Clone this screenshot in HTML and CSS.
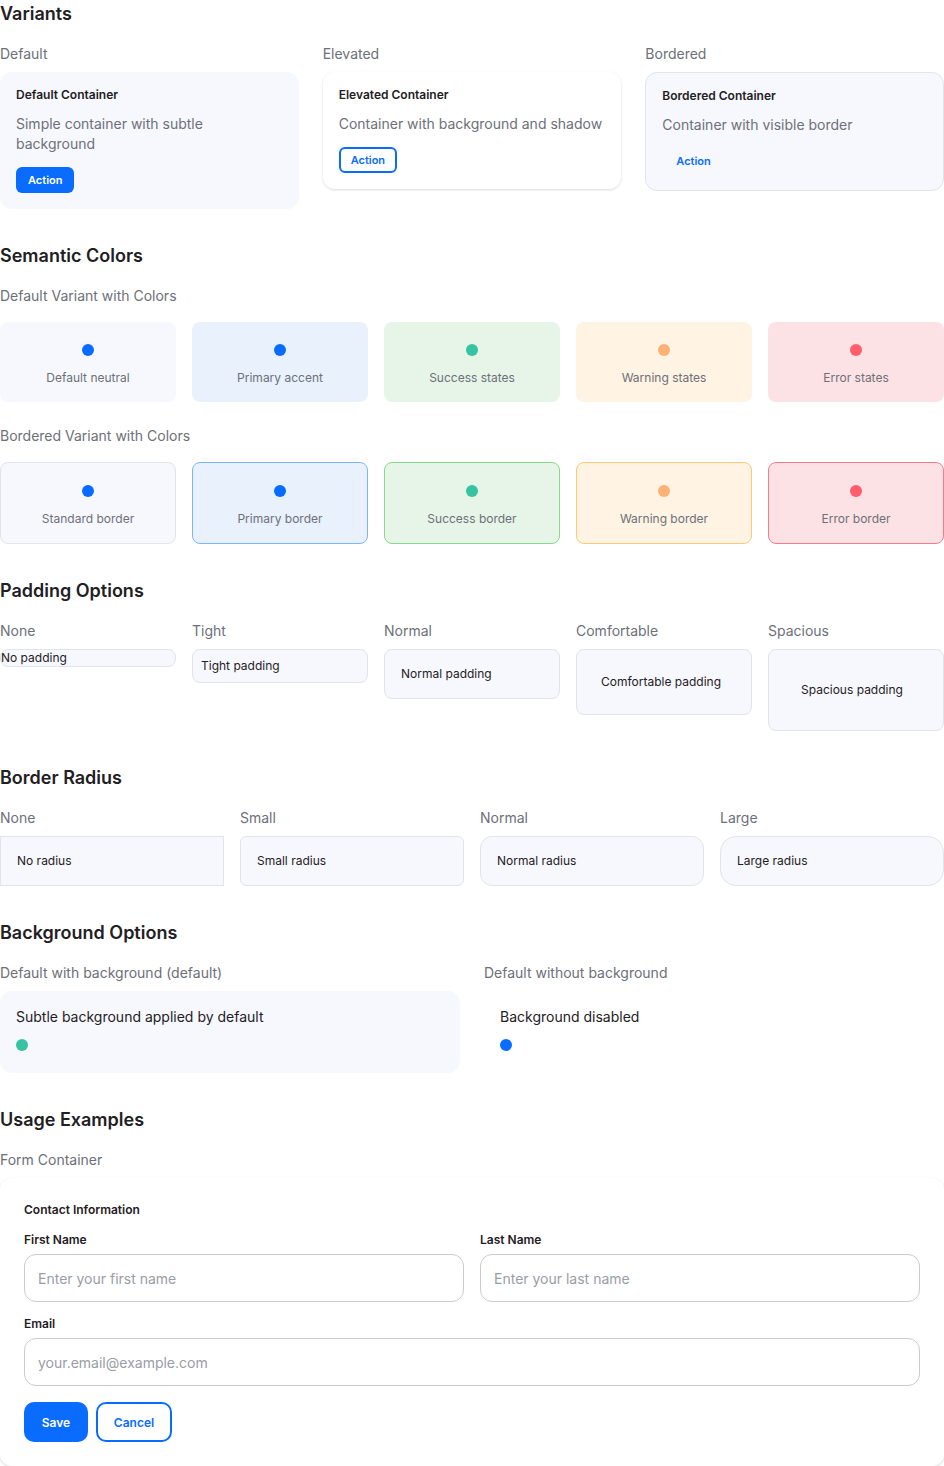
FILE: index.html
```html
<!DOCTYPE html>
<html lang="en">
<head>
<meta charset="utf-8">
<title>Container Variants</title>
<link rel="stylesheet" href="styles.css">
</head>
<body>
<main class="page">

  <section class="section">
    <h2 class="section-title">Variants</h2>
    <div class="grid-3">
      <div class="col">
        <div class="label">Default</div>
        <div class="box box-default">
          <div class="box-title">Default Container</div>
          <p class="box-desc">Simple container with subtle background</p>
          <div><button class="btn btn-solid">Action</button></div>
        </div>
      </div>
      <div class="col">
        <div class="label">Elevated</div>
        <div class="box box-elevated">
          <div class="box-title">Elevated Container</div>
          <p class="box-desc">Container with background and shadow</p>
          <div><button class="btn btn-outline">Action</button></div>
        </div>
      </div>
      <div class="col">
        <div class="label">Bordered</div>
        <div class="box box-bordered">
          <div class="box-title">Bordered Container</div>
          <p class="box-desc">Container with visible border</p>
          <div><button class="btn btn-ghost">Action</button></div>
        </div>
      </div>
    </div>
  </section>

  <section class="section">
    <h2 class="section-title">Semantic Colors</h2>
    <div class="sublabel">Default Variant with Colors</div>
    <div class="grid-5">
      <div class="swatch sw-neutral"><span class="dot-wrap"><span class="dot dot-blue"></span></span><span class="swatch-text">Default neutral</span></div>
      <div class="swatch sw-primary"><span class="dot-wrap"><span class="dot dot-blue"></span></span><span class="swatch-text">Primary accent</span></div>
      <div class="swatch sw-success"><span class="dot-wrap"><span class="dot dot-green"></span></span><span class="swatch-text">Success states</span></div>
      <div class="swatch sw-warning"><span class="dot-wrap"><span class="dot dot-orange"></span></span><span class="swatch-text">Warning states</span></div>
      <div class="swatch sw-error"><span class="dot-wrap"><span class="dot dot-red"></span></span><span class="swatch-text">Error states</span></div>
    </div>
    <div class="sublabel sublabel-spaced">Bordered Variant with Colors</div>
    <div class="grid-5">
      <div class="swatch sw-neutral bd-neutral"><span class="dot-wrap"><span class="dot dot-blue"></span></span><span class="swatch-text">Standard border</span></div>
      <div class="swatch sw-primary bd-primary"><span class="dot-wrap"><span class="dot dot-blue"></span></span><span class="swatch-text">Primary border</span></div>
      <div class="swatch sw-success bd-success"><span class="dot-wrap"><span class="dot dot-green"></span></span><span class="swatch-text">Success border</span></div>
      <div class="swatch sw-warning bd-warning"><span class="dot-wrap"><span class="dot dot-orange"></span></span><span class="swatch-text">Warning border</span></div>
      <div class="swatch sw-error bd-error"><span class="dot-wrap"><span class="dot dot-red"></span></span><span class="swatch-text">Error border</span></div>
    </div>
  </section>

  <section class="section">
    <h2 class="section-title">Padding Options</h2>
    <div class="grid-5 align-start">
      <div class="col">
        <div class="label">None</div>
        <div class="pad-box pad-0">No padding</div>
      </div>
      <div class="col">
        <div class="label">Tight</div>
        <div class="pad-box pad-8">Tight padding</div>
      </div>
      <div class="col">
        <div class="label">Normal</div>
        <div class="pad-box pad-16">Normal padding</div>
      </div>
      <div class="col">
        <div class="label">Comfortable</div>
        <div class="pad-box pad-24">Comfortable padding</div>
      </div>
      <div class="col">
        <div class="label">Spacious</div>
        <div class="pad-box pad-32">Spacious padding</div>
      </div>
    </div>
  </section>

  <section class="section">
    <h2 class="section-title">Border Radius</h2>
    <div class="grid-4">
      <div class="col">
        <div class="label">None</div>
        <div class="rad-box rad-0">No radius</div>
      </div>
      <div class="col">
        <div class="label">Small</div>
        <div class="rad-box rad-s">Small radius</div>
      </div>
      <div class="col">
        <div class="label">Normal</div>
        <div class="rad-box rad-m">Normal radius</div>
      </div>
      <div class="col">
        <div class="label">Large</div>
        <div class="rad-box rad-l">Large radius</div>
      </div>
    </div>
  </section>

  <section class="section">
    <h2 class="section-title">Background Options</h2>
    <div class="grid-2">
      <div class="col">
        <div class="label">Default with background (default)</div>
        <div class="bg-box bg-on">
          <p class="bg-text">Subtle background applied by default</p>
          <span class="dot-row"><span class="dot dot-green"></span></span>
        </div>
      </div>
      <div class="col">
        <div class="label">Default without background</div>
        <div class="bg-box">
          <p class="bg-text">Background disabled</p>
          <span class="dot-row"><span class="dot dot-blue"></span></span>
        </div>
      </div>
    </div>
  </section>

  <section class="section">
    <h2 class="section-title">Usage Examples</h2>
    <div class="label">Form Container</div>
    <form class="form-card">
      <div class="form-title">Contact Information</div>
      <div class="form-row">
        <label class="field">
          <span class="field-label">First Name</span>
          <input class="input" type="text" placeholder="Enter your first name">
        </label>
        <label class="field">
          <span class="field-label">Last Name</span>
          <input class="input" type="text" placeholder="Enter your last name">
        </label>
      </div>
      <label class="field">
        <span class="field-label">Email</span>
        <input class="input" type="email" placeholder="your.email@example.com">
      </label>
      <div class="form-actions">
        <button type="button" class="btn-lg btn-lg-solid">Save</button>
        <button type="button" class="btn-lg btn-lg-outline">Cancel</button>
      </div>
    </form>
  </section>

</main>
</body>
</html>
```

FILE: styles.css
```css
* { box-sizing: border-box; }

html, body {
  margin: 0;
  padding: 0;
  background: #ffffff;
}

body {
  font-family: Inter, "Noto Sans", "Liberation Sans", sans-serif;
  color: #1f2024;
  -webkit-font-smoothing: antialiased;
}

.page {
  width: 944px;
  display: flex;
  flex-direction: column;
  gap: 32px;
  padding-bottom: 40px;
}

.section { display: flex; flex-direction: column; }

.section-title {
  margin: 0 0 16px 0;
  font-size: 18px;
  line-height: 28px;
  font-weight: 600;
  color: #1f2024;
}
.section + .section .section-title { margin: 1px 0 16px 0; }

.label, .sublabel {
  font-size: 14px;
  line-height: 20px;
  color: #6d7079;
  margin-bottom: 8px;
}
.sublabel { margin-bottom: 16px; }
.sublabel-spaced { margin-top: 24px; }

.col { display: flex; flex-direction: column; min-width: 0; }

.grid-3 { display: grid; grid-template-columns: repeat(3, 1fr); gap: 24px; align-items: start; }
.grid-5 { display: grid; grid-template-columns: repeat(5, 1fr); gap: 16px; }
.grid-4 { display: grid; grid-template-columns: repeat(4, 1fr); gap: 16px; }
.grid-2 { display: grid; grid-template-columns: repeat(2, 1fr); gap: 24px; }
.align-start { align-items: start; }

/* Variants */
.box {
  border-radius: 12px;
  padding: 16px;
  display: flex;
  flex-direction: column;
  gap: 12px;
}
.box-default { background: #f7f8fd; }
.box-elevated {
  background: #ffffff;
  box-shadow: 0 1px 3px rgba(17, 24, 39, 0.10), 0 1px 2px rgba(17, 24, 39, 0.06);
}
.box-bordered { background: #f7f8fd; border: 1px solid #e2e4eb; }

.box-title {
  font-size: 12px;
  line-height: 14px;
  font-weight: 600;
  color: #1f2024;
}
.box-desc {
  margin: 0 0 1px 0;
  font-size: 14px;
  line-height: 20px;
  color: #6d7079;
}

.btn {
  font-family: inherit;
  font-size: 11px;
  font-weight: 600;
  height: 26px;
  padding: 0 12px;
  border-radius: 6px;
  cursor: pointer;
}
.btn-solid { background: #0a6cff; color: #ffffff; border: 0; }
.btn-outline { background: #ffffff; color: #0a6cff; border: 2px solid #0a6cff; padding: 0 10px; }
.btn-ghost { background: transparent; color: #0a6cff; border: 0; padding: 0 14px; }

/* Semantic swatches */
.swatch {
  border-radius: 8px;
  padding: 16px;
  display: flex;
  flex-direction: column;
  align-items: center;
  gap: 8px;
}
.dot-wrap {
  width: 24px;
  height: 24px;
  display: flex;
  align-items: center;
  justify-content: center;
}
.dot {
  display: block;
  width: 12px;
  height: 12px;
  border-radius: 50%;
}
.dot-blue { background: #0a6cff; }
.dot-green { background: #35c3a1; }
.dot-orange { background: #ffb075; }
.dot-red { background: #ff5d6b; }

.swatch-text {
  font-size: 12px;
  line-height: 16px;
  color: #6d7079;
}

.sw-neutral { background: #f7f8fd; }
.sw-primary { background: #e9f1fd; }
.sw-success { background: #e7f5e9; }
.sw-warning { background: #fff3e3; }
.sw-error { background: #fde2e5; }

.bd-neutral { border: 1px solid #e2e4eb; }
.bd-primary { border: 1px solid #7ab5ff; }
.bd-success { border: 1px solid #88d78c; }
.bd-warning { border: 1px solid #ffc878; }
.bd-error { border: 1px solid #f7798c; }

/* Padding */
.pad-box {
  background: #f7f8fd;
  border: 1px solid #e2e4eb;
  border-radius: 8px;
  font-size: 12px;
  line-height: 16px;
  color: #1f2024;
}
.pad-0 { padding: 0; }
.pad-8 { padding: 8px; }
.pad-16 { padding: 16px; }
.pad-24 { padding: 24px; }
.pad-32 { padding: 32px; }

/* Radius */
.rad-box {
  background: #f7f8fd;
  border: 1px solid #e2e4eb;
  padding: 16px;
  font-size: 12px;
  line-height: 16px;
  color: #1f2024;
}
.rad-0 { border-radius: 0; }
.rad-s { border-radius: 6px; }
.rad-m { border-radius: 12px; }
.rad-l { border-radius: 16px; }

/* Background */
.bg-box {
  border-radius: 12px;
  padding: 16px;
  display: flex;
  flex-direction: column;
  gap: 6px;
}
.bg-on { background: #f7f8fd; }
.bg-text {
  margin: 0;
  font-size: 14px;
  line-height: 20px;
  color: #1f2024;
}
.dot-row {
  height: 24px;
  display: flex;
  align-items: center;
}

/* Form */
.form-card {
  background: #ffffff;
  border-radius: 12px;
  box-shadow: 0 1px 3px rgba(17, 24, 39, 0.10), 0 1px 2px rgba(17, 24, 39, 0.06);
  padding: 24px;
  display: flex;
  flex-direction: column;
  gap: 14px;
  margin: 0;
}
.form-title {
  font-size: 12px;
  line-height: 16px;
  font-weight: 600;
  color: #1f2024;
}
.form-row {
  display: grid;
  grid-template-columns: 1fr 1fr;
  gap: 16px;
}
.field { display: flex; flex-direction: column; gap: 6px; }
.field-label {
  font-size: 12px;
  line-height: 16px;
  font-weight: 600;
  color: #1f2024;
}
.input {
  height: 48px;
  border: 1px solid #c9cbd2;
  border-radius: 12px;
  padding: 0 13px;
  font-family: inherit;
  font-size: 14px;
  color: #1f2024;
  background: #ffffff;
  outline: none;
  width: 100%;
}
.input::placeholder { color: #9a9da6; }

.form-actions {
  display: flex;
  gap: 8px;
  margin-top: 2px;
}
.btn-lg {
  height: 40px;
  border-radius: 10px;
  font-family: inherit;
  font-size: 12px;
  font-weight: 600;
  cursor: pointer;
}
.btn-lg-solid { background: #0a6cff; color: #ffffff; border: 0; width: 64px; }
.btn-lg-outline { background: #ffffff; color: #0a6cff; border: 2px solid #0a6cff; width: 76px; }
```
